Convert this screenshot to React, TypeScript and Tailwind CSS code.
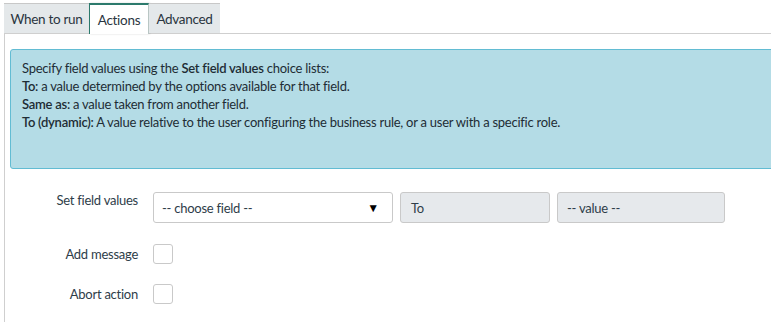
import React from "react";

export default function App() {
  return (
    <div
      className="w-[771px] h-[322px] bg-white overflow-hidden text-[#2e3d49] text-[13px] tracking-[-0.25px] leading-[18px]"
      style={{ fontFamily: "Lato, 'Liberation Sans', sans-serif" }}
    >
      <div className="pl-[4px] pt-[3px]">
        {/* Tabs */}
        <div className="flex items-stretch h-[31px] border-b border-[#cfcfcf] text-[13.5px] tracking-[-0.3px]">
          <div className="flex items-center justify-center whitespace-nowrap w-[85px] pt-[1px] bg-[#e4e8ea] border-t border-[#c8c8c8] text-[#2a3540]">
            When to run
          </div>
          <div className="flex items-center justify-center whitespace-nowrap w-[60px] bg-white border-t-[2px] border-t-[#2c7a6c] border-l border-l-[#2c7a6c] border-r border-r-[#b9c6c4] mb-[-1px] shadow-[1px_0_2px_rgba(0,0,0,0.15)] text-[#2a3540]">
            Actions
          </div>
          <div className="flex items-center justify-center whitespace-nowrap w-[71px] pt-[1px] bg-[#e4e8ea] border-t border-[#c8c8c8] text-[#2a3540]">
            Advanced
          </div>
        </div>
        {/* Panel */}
        <div className="border-l border-[#cfcfcf] h-[300px] pl-[5px] pt-[15px]">
          <div className="w-[780px] h-[120px] bg-[#b4dce6] border border-[#62bcd3] rounded-[3px] pl-[11px] pt-[9px] text-[#1e2d35]">
            <div>
              Specify field values using the <span className="font-semibold">Set field values</span> choice lists:
            </div>
            <div>
              <span className="font-semibold">To:</span> a value determined by the options available for that field.
            </div>
            <div>
              <span className="font-semibold">Same as:</span> a value taken from another field.
            </div>
            <div>
              <span className="font-semibold">To (dynamic):</span> A value relative to the user configuring the business rule, or a user with a specific role.
            </div>
          </div>

          {/* Form */}
          <div className="flex flex-col mt-[21px]">
            <div className="flex items-start">
              <div className="w-[128px] text-right leading-[18px] mt-[1px]">Set field values</div>
              <div className="flex ml-[15px] mt-[2px] gap-[7px]">
                <div className="w-[240px] h-[31px] border border-[#c9c9c9] rounded-[3px] bg-white flex items-center justify-between pl-[8px] pr-[13px]">
                  <span>-- choose field --</span>
                  <span className="text-[12px] text-black">▼</span>
                </div>
                <div className="w-[150px] h-[31px] border border-[#c9c9c9] rounded-[3px] bg-[#e6e9ec] flex items-center pl-[10px]">
                  To
                </div>
                <div className="w-[168px] h-[31px] border border-[#c9c9c9] rounded-[3px] bg-[#e6e9ec] flex items-center pl-[9px]">
                  -- value --
                </div>
              </div>
            </div>
            <div className="flex items-center mt-[21px]">
              <div className="w-[128px] text-right">Add message</div>
              <div className="ml-[15px] w-[20px] h-[20px] border border-[#c9c9c9] rounded-[3px] bg-white" />
            </div>
            <div className="flex items-center mt-[20px]">
              <div className="w-[128px] text-right">Abort action</div>
              <div className="ml-[15px] w-[20px] h-[20px] border border-[#c9c9c9] rounded-[3px] bg-white" />
            </div>
          </div>
        </div>
      </div>
    </div>
  );
}
